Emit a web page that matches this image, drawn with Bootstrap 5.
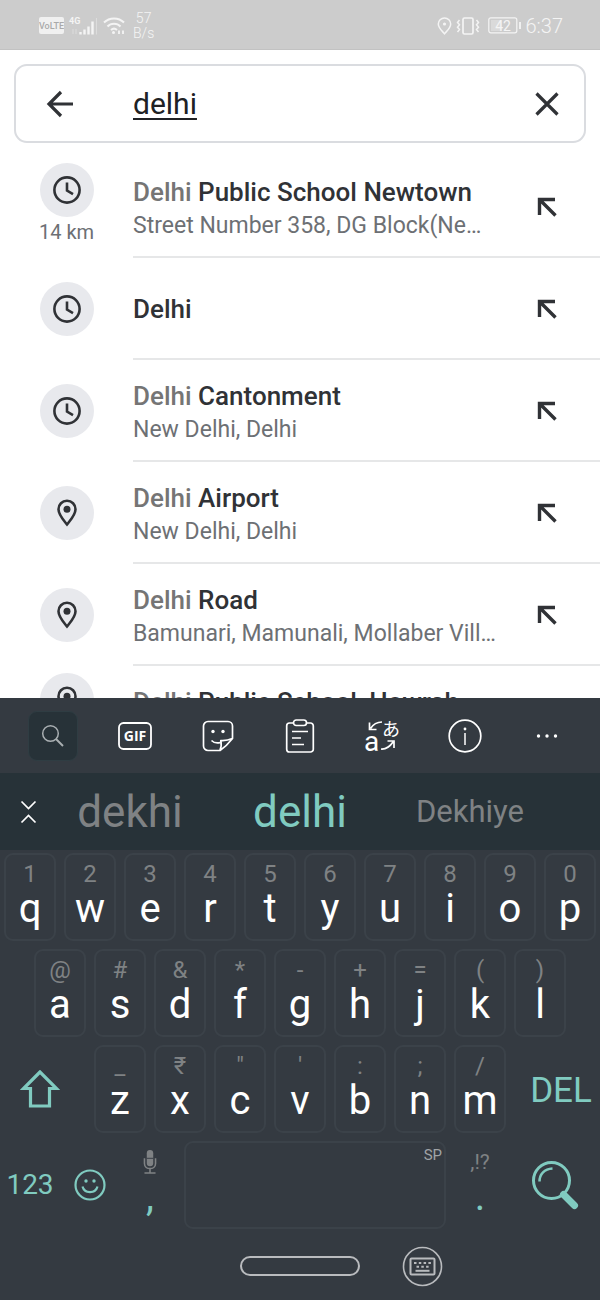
<!DOCTYPE html>
<html lang="en">
<head>
<meta charset="utf-8">
<meta name="viewport" content="width=device-width, initial-scale=1">
<title>Search: delhi</title>
<link href="https://cdn.jsdelivr.net/npm/bootstrap@5.3.0/dist/css/bootstrap.min.css" rel="stylesheet">
<style>
  :root { --panel:#343a41; --strip:#273238; --mint:#80cbc0; --dim:#7f8284; --ink:#303236; }
  body { font-family: Roboto, "Noto Sans CJK JP", sans-serif; background:#fff; color:var(--ink); }
  button { border:0; padding:0; background:none; color:inherit; }
  svg { display:block; fill:none; stroke:currentColor; }
  .screen { height:100vh; }

  .status { height:50px; background:#ccc; border-bottom:1px solid #c2c2c2; color:#f4f4f4; padding:2px 37px 0 39px; }
  .rate { font-size:14px; line-height:15px; font-weight:300; }
  .clock { font-size:20px; line-height:24px; font-weight:300; }

  .search-box { height:79px; margin:14px 14px 13px; border:2px solid #dadce0; border-radius:13px; }
  .search-box button { width:52px; height:52px; }
  .back-btn { margin-left:18px; }
  .clear-btn { margin-right:11px; }
  .search-box input { font-size:30px; line-height:40px; border:0; outline:0; padding:0; margin-left:47px; color:#202124; text-decoration:underline; text-decoration-thickness:2px; text-underline-offset:4px; min-width:0; }

  .hit { height:102px; flex-shrink:0; display:grid; grid-template-columns:133px minmax(0,1fr); }
  .disc { width:54px; height:54px; background:#e8e9ed; border-radius:50%; }
  .km { font-size:20px; line-height:30px; padding-bottom:4px; color:#6d7074; }
  .hit-body { border-bottom:2px solid #e6e7e8; padding-top:2px; }
  .two-line { padding-top:4px; }
  .hit-name { font-size:26px; line-height:34px; font-weight:500; }
  .hit-name span { color:#757575; }
  .hit-place { font-size:23px; line-height:34px; color:#6d7074; }
  .fill-btn { width:99px; height:60px; padding-right:7px; }

  .keyboard { background:var(--panel); color:#fff; }
  .tools { height:75px; padding:0 12px; }
  .find-tile { width:50px; height:50px; border-radius:9px; background:var(--strip); border:1px solid #2f3d43; color:#a9afb2; }
  .words { height:77px; background:var(--strip); display:grid; grid-template-columns:45px repeat(3,1fr) 45px; color:var(--dim); }
  .word-lg { font-size:44px; line-height:52px; }
  .word-md { font-size:31px; line-height:40px; }
  .mint { color:var(--mint); }

  .keys { display:grid; grid-template-columns:repeat(20,minmax(0,1fr)); row-gap:8px; padding:3px 0; }
  .key { grid-column:span 2; height:88px; margin:0 4px; display:flex; flex-direction:column; align-items:center; padding-top:7px; border:2px solid #3b4249; border-radius:9px; font-size:40px; line-height:46px; }
  .key small { font-size:24px; line-height:24px; color:var(--dim); }
  .key.bare { border-color:transparent; }
  .indent { grid-column:2 / span 2; }
  .wide3 { grid-column:span 3; }
  .wide2 { grid-column:span 2; }
  .shift { grid-column:1 / span 3; }
  .space-key { grid-column:span 9; justify-content:flex-start; align-items:flex-end; padding:2px; font-size:15px; line-height:20px; color:#a0a4a7; }
  .del { font-size:35px; line-height:40px; padding:4px 0 0 12px; }
  .num { font-size:28px; line-height:36px; }
  .key .punct { font-size:21px; }

  .navbar-sys { height:68px; display:grid; grid-template-columns:1fr 120px 1fr; align-items:center; color:#b9bbbe; }
  .pill { height:20px; border:2px solid #b9bbbe; border-radius:10px; grid-column:2; }
  .ime { margin-left:42px; width:41px; }
</style>
</head>
<body>
<svg width="0" height="0" class="position-absolute" aria-hidden="true">
  <symbol id="clock" viewBox="0 0 30 30"><circle cx="15" cy="15" r="12.6" stroke-width="2.6"/><path d="M15 7.6v8l6 3.6" stroke-width="2.6"/></symbol>
  <symbol id="pin" viewBox="0 0 30 30"><path d="M15 2.8c-4.800 0-8.500 3.600-8.500 8.500 0 5.700 5.200 11 8.500 15.200 3.300-4.200 8.500-9.500 8.500-15.200 0-4.900-3.700-8.500-8.500-8.500z" stroke-width="2.6"/><circle cx="15" cy="11.200" r="3.500" fill="currentColor" stroke="none"/></symbol>
  <symbol id="fill" viewBox="0 0 20 20"><path d="M2.500 18V2.500H18M3 3l15.500 15.500" stroke-width="3.4"/></symbol>
</svg>

<div class="screen d-flex flex-column overflow-hidden">
  <header class="status d-flex align-items-center justify-content-between flex-shrink-0">
    <div class="d-flex align-items-center">
      <svg width="25" height="17" viewBox="0 0 25 17"><rect width="25" height="17" rx="2" fill="#f0f0f0" stroke="none"/><text x="12.500" y="12" text-anchor="middle" font-family="Roboto" font-size="9" font-weight="500" fill="#aaa" stroke="none">VoLTE</text></svg>
      <svg class="ms-1" width="31" height="22" viewBox="0 0 31 22"><text x="1" y="9" font-family="Roboto" font-size="9" font-weight="700" fill="currentColor" stroke="none">4G</text><path d="M12.500 19.500v-2.500M16.500 19.500v-5M20.500 19.500v-8M24.500 19.500v-13" stroke-width="2.400"/><path d="M28.500 19.500V3M5 14v5M8 14v5" stroke-width="1" opacity=".4"/></svg>
      <svg class="ms-1" width="22" height="19" viewBox="0 0 22 19"><path d="M1 6.500c5.500-5.500 14.500-5.500 20 0M4.500 10.500c3.500-3.700 9.500-3.700 13 0M8 14c1.800-1.600 4.200-1.600 6 0" stroke-width="2"/><circle cx="10.500" cy="16.500" r="1.500" fill="currentColor" stroke="none"/><path d="M16 14.500v3.500M20 14.500v3.500" stroke-width="1.800"/></svg>
      <div class="rate text-center ms-2">57<br>B/s</div>
    </div>
    <div class="d-flex align-items-center gap-1">
      <svg width="15" height="18" viewBox="0 0 15 18"><path d="M7.500 1C4 1 1.300 3.700 1.300 7c0 3.800 3.700 6.800 6.200 9.800 2.500-3 6.200-6 6.200-9.800 0-3.300-2.700-6-6.200-6z" stroke-width="1.500"/><circle cx="7.500" cy="7" r="1.600" fill="currentColor" stroke="none"/></svg>
      <svg width="24" height="18" viewBox="0 0 24 18"><rect x="7" y="1" width="10" height="16" rx="1.500" stroke-width="1.700"/><path d="M3.500 3l-2 2.400 2 2.400-2 2.400 2 2.400-2 2.400M20.500 3l2 2.400-2 2.400 2 2.400-2 2.400 2 2.400" stroke-width="1.500"/></svg>
      <svg class="ms-1" width="34" height="17" viewBox="0 0 34 17"><rect x=".8" y=".8" width="28" height="15" rx="2" stroke-width="1.200"/><rect x="3" y="3" width="11" height="11" fill="#dadada" stroke="none"/><path d="M32 5v7" stroke-width="1.800"/><text x="15" y="13.500" text-anchor="middle" font-family="Roboto" font-size="14" fill="currentColor" stroke="none">42</text></svg>
      <span class="clock">6:37</span>
    </div>
  </header>

  <form class="search-box d-flex align-items-center flex-shrink-0">
    <button type="button" class="back-btn d-flex align-items-center justify-content-center" aria-label="Back"><svg width="28" height="28" viewBox="0 0 28 28"><path d="M27 14H3M15 2L3 14l12 12" stroke-width="3.2"/></svg></button>
    <input type="text" class="flex-grow-1" value="delhi" aria-label="Search here">
    <button type="button" class="clear-btn d-flex align-items-center justify-content-center" aria-label="Clear"><svg width="24" height="24" viewBox="0 0 24 24"><path d="M1.500 1.500l21 21M22.500 1.500l-21 21" stroke-width="3.2"/></svg></button>
  </form>

  <main class="flex-grow-1 overflow-hidden d-flex flex-column">
    <div class="hit">
      <div class="d-flex flex-column align-items-center justify-content-center"><div class="disc d-flex align-items-center justify-content-center"><svg width="30" height="30"><use href="#clock"/></svg></div><div class="km">14 km</div></div>
      <div class="hit-body d-flex align-items-center"><div class="two-line flex-grow-1 text-truncate"><div class="hit-name text-truncate"><span>Delhi</span> Public School Newtown</div><div class="hit-place text-truncate">Street Number 358, DG Block(Ne…</div></div><button class="fill-btn flex-shrink-0 d-flex align-items-center justify-content-center" aria-label="Use suggestion"><svg width="20" height="20"><use href="#fill"/></svg></button></div>
    </div>
    <div class="hit">
      <div class="d-flex align-items-center justify-content-center"><div class="disc d-flex align-items-center justify-content-center"><svg width="30" height="30"><use href="#clock"/></svg></div></div>
      <div class="hit-body d-flex align-items-center"><div class="flex-grow-1 text-truncate"><div class="hit-name text-truncate">Delhi</div></div><button class="fill-btn flex-shrink-0 d-flex align-items-center justify-content-center" aria-label="Use suggestion"><svg width="20" height="20"><use href="#fill"/></svg></button></div>
    </div>
    <div class="hit">
      <div class="d-flex align-items-center justify-content-center"><div class="disc d-flex align-items-center justify-content-center"><svg width="30" height="30"><use href="#clock"/></svg></div></div>
      <div class="hit-body d-flex align-items-center"><div class="two-line flex-grow-1 text-truncate"><div class="hit-name text-truncate"><span>Delhi</span> Cantonment</div><div class="hit-place text-truncate">New Delhi, Delhi</div></div><button class="fill-btn flex-shrink-0 d-flex align-items-center justify-content-center" aria-label="Use suggestion"><svg width="20" height="20"><use href="#fill"/></svg></button></div>
    </div>
    <div class="hit">
      <div class="d-flex align-items-center justify-content-center"><div class="disc d-flex align-items-center justify-content-center"><svg width="30" height="30"><use href="#pin"/></svg></div></div>
      <div class="hit-body d-flex align-items-center"><div class="two-line flex-grow-1 text-truncate"><div class="hit-name text-truncate"><span>Delhi</span> Airport</div><div class="hit-place text-truncate">New Delhi, Delhi</div></div><button class="fill-btn flex-shrink-0 d-flex align-items-center justify-content-center" aria-label="Use suggestion"><svg width="20" height="20"><use href="#fill"/></svg></button></div>
    </div>
    <div class="hit">
      <div class="d-flex align-items-center justify-content-center"><div class="disc d-flex align-items-center justify-content-center"><svg width="30" height="30"><use href="#pin"/></svg></div></div>
      <div class="hit-body d-flex align-items-center"><div class="two-line flex-grow-1 text-truncate"><div class="hit-name text-truncate"><span>Delhi</span> Road</div><div class="hit-place text-truncate">Bamunari, Mamunali, Mollaber Vill…</div></div><button class="fill-btn flex-shrink-0 d-flex align-items-center justify-content-center" aria-label="Use suggestion"><svg width="20" height="20"><use href="#fill"/></svg></button></div>
    </div>
    <div class="hit">
      <div class="d-flex flex-column align-items-center justify-content-center"><div class="disc d-flex align-items-center justify-content-center"><svg width="30" height="30"><use href="#pin"/></svg></div><div class="km">&nbsp;</div></div>
      <div class="hit-body d-flex align-items-center"><div class="two-line flex-grow-1 text-truncate"><div class="hit-name text-truncate"><span>Delhi</span> Public School, Howrah</div><div class="hit-place">&nbsp;</div></div><div class="fill-btn flex-shrink-0"></div></div>
    </div>
  </main>

  <section class="keyboard flex-shrink-0" aria-label="Keyboard">
    <div class="tools d-flex align-items-center">
      <div class="col d-flex justify-content-center"><button class="find-tile d-flex align-items-center justify-content-center" aria-label="Search"><svg width="24" height="24" viewBox="0 0 24 24"><circle cx="9.500" cy="9.500" r="7.800" stroke-width="1.500"/><path d="M15 15l7 7" stroke-width="2"/></svg></button></div>
      <div class="col d-flex justify-content-center"><button aria-label="GIF"><svg width="34" height="28" viewBox="0 0 34 28"><rect x="1" y="1" width="32" height="26" rx="4.500" stroke-width="1.800"/><text x="17" y="19" text-anchor="middle" font-family="Open Sans" font-weight="700" font-size="14" fill="currentColor" stroke="none">GIF</text></svg></button></div>
      <div class="col d-flex justify-content-center"><button aria-label="Stickers"><svg width="32" height="32" viewBox="0 0 32 32"><path d="M18 30.500H6a4.500 4.500 0 0 1-4.500-4.500V6A4.500 4.500 0 0 1 6 1.500h20A4.500 4.500 0 0 1 30.500 6v12.500C27 23 22.500 27.500 18 30.500zM18 30c1.500-3 1.500-6 .8-9.500 4 .3 7.500-.2 11.500-2" stroke-width="1.700" stroke-linejoin="round"/><path d="M9.500 20.500c2 2 5.500 3 9 2" stroke-width="1.700"/><circle cx="11" cy="11.500" r="1.700" fill="currentColor" stroke="none"/><circle cx="21" cy="11.500" r="1.700" fill="currentColor" stroke="none"/></svg></button></div>
      <div class="col d-flex justify-content-center"><button aria-label="Clipboard"><svg width="30" height="36" viewBox="0 0 30 36"><path d="M8.500 5H4.500A2.800 2.800 0 0 0 1.700 7.800v23.400A2.800 2.800 0 0 0 4.500 34h21a2.800 2.800 0 0 0 2.800-2.800V7.800A2.800 2.800 0 0 0 25.500 5h-4" stroke-width="1.700"/><rect x="8.500" y="2" width="13" height="5.500" rx="2.700" stroke-width="1.700"/><path d="M7 13.500h16M7 20h9M7 26.500h12" stroke-width="1.700"/></svg></button></div>
      <div class="col d-flex justify-content-center"><button aria-label="Translate"><svg width="36" height="36" viewBox="0 0 36 36"><text x="0" y="33" font-family="Roboto" font-size="28" fill="currentColor" stroke="none">a</text><text x="18" y="18" font-family="Noto Sans CJK JP" font-size="18" font-weight="400" fill="currentColor" stroke="none">あ</text><path d="M18 4C12 4 9 6.500 6.500 10.500M5.500 4.500v7h7M17 31c6 .5 9-2.500 12-7M23.500 23h6.500v7" stroke-width="1.700"/></svg></button></div>
      <div class="col d-flex justify-content-center"><button aria-label="Information"><svg width="34" height="34" viewBox="0 0 34 34"><circle cx="17" cy="17" r="15.800" stroke-width="1.700"/><path d="M17 14v12" stroke-width="1.500"/><circle cx="17" cy="10" r="1.400" fill="currentColor" stroke="none"/></svg></button></div>
      <div class="col d-flex justify-content-center"><button aria-label="More"><svg width="22" height="6" viewBox="0 0 22 6"><g fill="currentColor" stroke="none"><circle cx="2.500" cy="3" r="1.700"/><circle cx="11" cy="3" r="1.700"/><circle cx="19.500" cy="3" r="1.700"/></g></svg></button></div>
    </div>

    <div class="words align-items-center">
      <button class="text-white d-flex justify-content-end pe-2" aria-label="Collapse"><svg width="17" height="24" viewBox="0 0 17 24"><path d="M1.500 1.500l7 7 7-7M1.500 22.500l7-7 7 7" stroke-width="1.700"/></svg></button>
      <button class="word-lg">dekhi</button>
      <button class="word-lg mint">delhi</button>
      <button class="word-md">Dekhiye</button>
    </div>

    <div class="keys">
      <button class="key"><small>1</small>q</button>
      <button class="key"><small>2</small>w</button>
      <button class="key"><small>3</small>e</button>
      <button class="key"><small>4</small>r</button>
      <button class="key"><small>5</small>t</button>
      <button class="key"><small>6</small>y</button>
      <button class="key"><small>7</small>u</button>
      <button class="key"><small>8</small>i</button>
      <button class="key"><small>9</small>o</button>
      <button class="key"><small>0</small>p</button>

      <button class="key indent"><small>@</small>a</button>
      <button class="key"><small>#</small>s</button>
      <button class="key"><small>&amp;</small>d</button>
      <button class="key"><small>*</small>f</button>
      <button class="key"><small>-</small>g</button>
      <button class="key"><small>+</small>h</button>
      <button class="key"><small>=</small>j</button>
      <button class="key"><small>(</small>k</button>
      <button class="key"><small>)</small>l</button>

      <button class="shift mint d-flex align-items-center ps-3" aria-label="Shift"><svg class="ms-1" width="40" height="38" viewBox="0 0 40 38"><path d="M20 2L3.500 18.500H10.500V36h19V18.500h7z" stroke-width="3.200"/></svg></button>
      <button class="key"><small>_</small>z</button>
      <button class="key"><small>₹</small>x</button>
      <button class="key"><small>"</small>c</button>
      <button class="key"><small>'</small>v</button>
      <button class="key"><small>:</small>b</button>
      <button class="key"><small>;</small>n</button>
      <button class="key"><small>/</small>m</button>
      <button class="wide3 mint del">DEL</button>

      <button class="wide2 mint num">123</button>
      <button class="wide2 mint d-flex align-items-center justify-content-center" aria-label="Emoji"><svg width="32" height="32" viewBox="0 0 32 32"><circle cx="16" cy="16" r="14.500" stroke-width="2.200"/><path d="M8.500 17.500c2 7.500 13 7.500 15 0" stroke-width="2.200"/><circle cx="12" cy="12" r="1.700" fill="currentColor" stroke="none"/><circle cx="20" cy="12" r="1.700" fill="currentColor" stroke="none"/></svg></button>
      <button class="key bare mint"><small aria-label="Voice"><svg width="14" height="24" viewBox="0 0 14 26"><rect x="3.500" y="0" width="7" height="17.500" rx="3.500" fill="currentColor" stroke="none"/><path d="M3.500 9h7" stroke="#343a41"/><path d="M1 9v5.500c0 7.500 12 7.500 12 0V9M7 20v5M1 25h12" stroke-width="1.700"/></svg></small>,</button>
      <button class="key space-key">SP</button>
      <button class="key bare mint"><small class="punct">,!?</small>.</button>
      <button class="wide3 mint d-flex align-items-center justify-content-center" aria-label="Search"><svg width="48" height="50" viewBox="0 0 48 50"><circle cx="20.500" cy="20.500" r="18" stroke-width="3"/><path d="M8.500 21.500c0-7.500 5-12.500 13-13" stroke-width="2.500"/><path d="M32.500 34.500L43.500 45.500" stroke-width="7" stroke-linecap="round"/></svg></button>
    </div>

    <nav class="navbar-sys">
      <button class="pill" aria-label="Home"></button>
      <button class="ime" aria-label="Switch keyboard"><svg width="41" height="41" viewBox="0 0 41 41"><circle cx="20.500" cy="20.500" r="19" stroke-width="1.600"/><rect x="8.500" y="12.500" width="24" height="16" rx="1" stroke-width="2"/><path d="M12 17h17" stroke-width="2" stroke-dasharray="2.500 2.300"/><path d="M14.500 20.800h13" stroke-width="2" stroke-dasharray="2.500 2.300"/><path d="M13.500 24.800h14" stroke-width="2"/></svg></button>
    </nav>
  </section>
</div>
<script src="https://cdn.jsdelivr.net/npm/bootstrap@5.3.0/dist/js/bootstrap.bundle.min.js"></script>
</body>
</html>
